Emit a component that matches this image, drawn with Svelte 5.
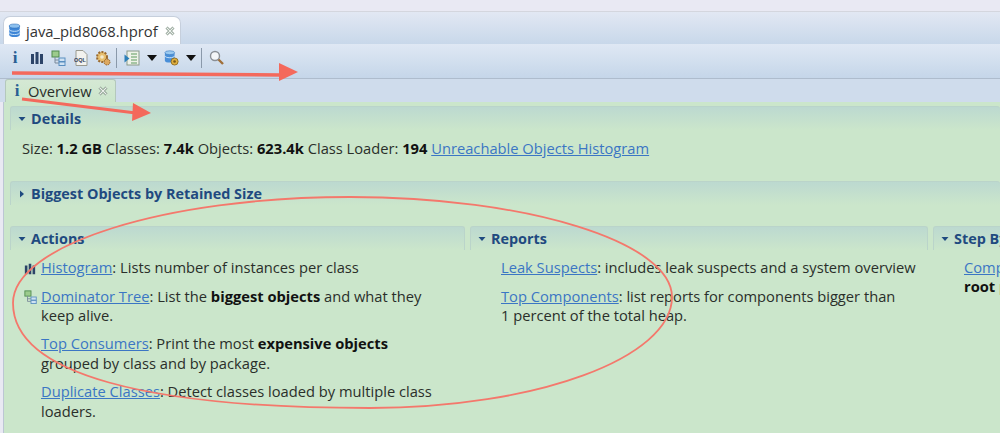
<script>
  const actions = [
    { icon: "histogram", link: "Histogram", parts: [": Lists number of instances per class"] },
    { icon: "tree", link: "Dominator Tree", parts: [": List the ", "*biggest objects", " and what they keep alive."] },
    { link: "Top Consumers", parts: [": Print the most ", "*expensive objects", " grouped by class and by package."] },
    { link: "Duplicate Classes", parts: [": Detect classes loaded by multiple class loaders."] },
  ];
  const reports = [
    { link: "Leak Suspects", parts: [": includes leak suspects and a system overview"] },
    { link: "Top Components", parts: [": list reports for components bigger than 1\u00a0percent of the total heap."] },
  ];
  const steps = [
    { link: "Component Report", parts: [": Analyze objects which belong to a common ", "*root package", " or class loader."] },
  ];
</script>

{#snippet histogramIcon(w, h)}
  <svg width={w} height={h} viewBox="0 0 14 14">
    <path d="M1 3h3v10H1zM5.500 1h3v12h-3zM10 3h3v10h-3z" fill="#2c4468" />
  </svg>
{/snippet}

{#snippet treeIcon(w, h)}
  <svg width={w} height={h} viewBox="0 0 16 16">
    <rect x="1" y="1" width="7" height="6" fill="#9ccb8c" stroke="#4f8a4f" />
    <path d="M4 7v6h4M4 10h4" fill="none" stroke="#7a8a9a" />
    <rect x="8" y="8" width="6" height="3.500" fill="#cfe2f3" stroke="#5a8fc0" />
    <rect x="8" y="12" width="6" height="3.500" fill="#cfe2f3" stroke="#5a8fc0" />
  </svg>
{/snippet}

{#snippet dbIcon(w, h)}
  <svg class="fixed" width={w} height={h} viewBox="0 0 16 18">
    <path d="M1.500 3.500v11c0 1.500 2.800 2.500 6.500 2.500s6.500-1 6.500-2.500v-11z" fill="#3f86d6" />
    <ellipse cx="8" cy="3.500" rx="6.500" ry="2.500" fill="#8cc0ee" stroke="#2a6cb8" stroke-width="0.700" />
    <path d="M1.500 7.500c0 1.500 2.800 2.500 6.500 2.500s6.500-1 6.500-2.500M1.500 11.500c0 1.500 2.800 2.500 6.500 2.500s6.500-1 6.500-2.500" fill="none" stroke="#d8ecfb" stroke-width="1.100" />
  </svg>
{/snippet}

{#snippet caret(open)}
  <svg class="caret" width="8" height="8" viewBox="0 0 8 8">
    {#if open}
      <path d="M0.500 2h7L4 6z" fill="#1f4a80" />
    {:else}
      <path d="M2 0.500v7L6 4z" fill="#1f4a80" />
    {/if}
  </svg>
{/snippet}

{#snippet closeIcon()}
  <svg class="fixed close" width="10" height="10" viewBox="0 0 10 10">
    <path d="M1.500 1.500l7 7M8.500 1.500l-7 7" stroke="#7f9184" stroke-width="2.800" fill="none" />
    <path d="M1.500 1.500l7 7M8.500 1.500l-7 7" stroke="#eef3ee" stroke-width="1.100" fill="none" />
  </svg>
{/snippet}

{#snippet rich(item)}
  <a href="#top">{item.link}</a>{#each item.parts as part}{#if part.startsWith("*")}<b>{part.slice(1)}</b>{:else}{part}{/if}{/each}
{/snippet}

{#snippet section(title, open)}
  <div class="head">
    {@render caret(open)}
    <span>{title}</span>
  </div>
{/snippet}

<div class="page">
  <div class="strip"></div>

  <div class="editor-tabs">
    <div class="editor-tab">
      {@render dbIcon(13, 15)}
      <span>java_pid8068.hprof</span>
      {@render closeIcon()}
    </div>
  </div>

  <div class="toolbar">
    <span class="info">i</span>
    {@render histogramIcon(14, 14)}
    {@render treeIcon(16, 16)}
    <svg width="14" height="16" viewBox="0 0 14 16">
      <path d="M2 .5h7l4 4v11H2z" fill="#f2f2ee" stroke="#9a9a90" />
      <text x="0" y="11.500" font-size="5.500" font-weight="700" fill="#33415c" font-family="Liberation Sans">OQL</text>
    </svg>
    <svg width="16" height="16" viewBox="0 0 16 16">
      <circle cx="7" cy="7" r="5" fill="#e8c070" stroke="#9a6a30" stroke-width="2" stroke-dasharray="2 1.200" />
      <circle cx="7" cy="7" r="1.800" fill="#f4ead0" />
      <circle cx="12" cy="12" r="3" fill="#dca860" stroke="#8f6028" stroke-dasharray="1.500 .8" />
    </svg>
    <i class="sep"></i>
    <svg width="16" height="16" viewBox="0 0 16 16">
      <rect x="3" y="1" width="12" height="14" fill="#eef2e8" stroke="#8a9a8a" />
      <path d="M7 4h6M7 7h6M7 10h6M7 13h6" stroke="#5f9a5f" />
      <path d="M0.500 4.500l5 4-5 4z" fill="#2c7fb8" />
    </svg>
    <svg width="10" height="6" viewBox="0 0 10 6"><path d="M0 0h10L5 6z" fill="#111" /></svg>
    <svg width="15" height="16" viewBox="0 0 17 18">
      <path d="M1 3v9c0 1.300 2.500 2.200 5.500 2.200S12 13.300 12 12V3z" fill="#4a8fd8" />
      <ellipse cx="6.500" cy="3" rx="5.500" ry="2.200" fill="#9ccbf0" stroke="#2a6cb8" stroke-width="0.600" />
      <path d="M1 6.500c0 1.300 2.500 2.200 5.500 2.200S12 7.800 12 6.500" fill="none" stroke="#d8ecfb" />
      <circle cx="12" cy="13" r="4" fill="#e0b040" stroke="#8a6a20" />
      <circle cx="12" cy="13" r="1.500" fill="#7a5a18" />
    </svg>
    <svg width="10" height="6" viewBox="0 0 10 6"><path d="M0 0h10L5 6z" fill="#111" /></svg>
    <i class="sep"></i>
    <svg width="15" height="15" viewBox="0 0 15 15">
      <circle cx="6" cy="6" r="4.500" fill="#f4f6f8" stroke="#8a8f96" stroke-width="1.400" />
      <path d="M9.500 9.500l4.500 4.500" stroke="#a0703a" stroke-width="2.400" />
    </svg>
  </div>

  <div class="page-tabs">
    <div class="page-tab">
      <span class="info">i</span>
      <span class="label">Overview</span>
      {@render closeIcon()}
    </div>
  </div>

  <div class="form">
    <div class="block">
      {@render section("Details", true)}
      <p class="details">
        Size: <b>1.2 GB</b> Classes: <b>7.4k</b> Objects: <b>623.4k</b> Class Loader: <b>194</b>
        <a href="#top">Unreachable Objects Histogram</a>
      </p>
    </div>

    <div class="block collapsed">
      {@render section("Biggest Objects by Retained Size", false)}
    </div>

    <div class="columns">
      <div class="col">
        {@render section("Actions", true)}
        <ul>
          {#each actions as item}
            <li>
              {#if item.icon === "histogram"}
                <span class="mark">{@render histogramIcon(12, 12)}</span>
              {:else if item.icon === "tree"}
                <span class="mark">{@render treeIcon(14, 14)}</span>
              {/if}
              {@render rich(item)}
            </li>
          {/each}
        </ul>
      </div>
      <div class="col">
        {@render section("Reports", true)}
        <ul class="wide">
          {#each reports as item}
            <li>{@render rich(item)}</li>
          {/each}
        </ul>
      </div>
      <div class="col">
        {@render section("Step By Step", true)}
        <ul class="wide">
          {#each steps as item}
            <li>{@render rich(item)}</li>
          {/each}
        </ul>
      </div>
    </div>
  </div>

  <!-- annotations drawn on top of the screenshot -->
  <svg class="marks" width="1000" height="433" viewBox="0 0 1000 433">
    <path d="M12 73L282 75" stroke="#f4695c" stroke-width="3.500" fill="none" />
    <path d="M279 63L298 72L279 81z" fill="#f4695c" />
    <path d="M22 99L136 113" stroke="#f4695c" stroke-width="3" fill="none" />
    <path d="M133 103L151 113L132 121z" fill="#f4695c" />
    <path d="M13 303C13 245 165 197 350 197C527 197 672 242 672 297C672 358 536 408 370 408C150 408 13 375 13 303z" fill="none" stroke="#f4786c" stroke-width="1.800" />
  </svg>
</div>

<style>
  :global(body) {
    margin: 0;
    background: #e9e9f3;
  }

  .page {
    position: relative;
    width: 1000px;
    height: 433px;
    overflow: hidden;
    font-family: "Open Sans", "Noto Sans", sans-serif;
    font-size: 14.700px;
    color: #2a2f2a;
    background: #e9e9f3;
  }

  .strip {
    height: 11px;
    border-bottom: 1px solid #d4d6de;
  }

  .editor-tabs {
    display: flex;
    align-items: flex-end;
    height: 32px;
    padding-left: 3px;
    background: linear-gradient(#e2e8f3, #c8d8ea);
  }

  .editor-tab {
    display: flex;
    align-items: center;
    gap: 5px;
    width: 178px;
    height: 28px;
    box-sizing: border-box;
    padding-left: 4px;
    background: #fff;
    border-radius: 7px 7px 0 0;
    border: 1px solid #c6cfdc;
    border-bottom: 0;
    font-size: 14.800px;
    color: #333;
  }

  .fixed {
    flex-shrink: 0;
  }

  .editor-tab .close {
    margin-left: 2px;
  }

  .toolbar {
    display: flex;
    align-items: center;
    gap: 7px;
    height: 35px;
    padding: 0 0 7px 10px;
    box-sizing: border-box;
    background: linear-gradient(#dfe8f4, #c5d6e9);
    border-bottom: 1px solid #aebccd;
  }

  .toolbar .info {
    margin-right: 3px;
  }

  .info {
    font-family: "Liberation Serif", serif;
    font-weight: 700;
    font-size: 17px;
    color: #2a5f94;
    width: 10px;
    text-align: center;
  }

  .sep {
    width: 1px;
    height: 20px;
    margin-left: -2px;
    background: #8a99aa;
  }

  .page-tabs {
    display: flex;
    align-items: flex-end;
    height: 23px;
    padding-left: 5px;
    background: #cfdcec;
  }

  .page-tab {
    display: flex;
    align-items: center;
    gap: 6px;
    width: 111px;
    height: 23px;
    box-sizing: border-box;
    padding-left: 6px;
    background: linear-gradient(#d5e8d4, #cbe6cb);
    border: 1px solid #b4c8bc;
    border-bottom: 0;
    border-radius: 3px 3px 0 0;
  }

  .form {
    height: 332px;
    padding: 4px 0 0 6px;
    margin-left: 3px;
    box-sizing: border-box;
    background: #cbe6cb;
    border-left: 1px solid #bcc6d4;
  }

  .block.collapsed {
    margin-top: 21px;
  }

  .head {
    display: flex;
    align-items: center;
    gap: 5px;
    height: 24px;
    padding-left: 7px;
    box-sizing: border-box;
    border: 1px solid #bad4ca;
    border-width: 1px 1px 0;
    border-radius: 3px 3px 0 0;
    background: linear-gradient(#bcd9d0, #cbe6cb);
    color: #1f4a80;
    font-weight: 700;
    font-size: 14.400px;
  }

  .block .head {
    border-right: 0;
  }

  .details {
    margin: 6px 0 0 12px;
    line-height: 24px;
  }

  a {
    color: #3b76c4;
    text-decoration: underline;
  }

  b {
    color: #111;
  }

  .columns {
    display: grid;
    grid-template-columns: 455px 458px 480px;
    gap: 5px;
    margin-top: 21px;
  }

  ul {
    list-style: none;
    margin: 8px 0 0;
    padding: 0 26px 0 31px;
    line-height: 19.300px;
  }

  ul.wide {
    padding-right: 6px;
  }

  li {
    position: relative;
    margin-bottom: 9.300px;
  }

  .mark {
    position: absolute;
    left: -17px;
    top: 2px;
  }

  .marks {
    position: absolute;
    left: 0;
    top: 0;
    pointer-events: none;
  }
</style>
